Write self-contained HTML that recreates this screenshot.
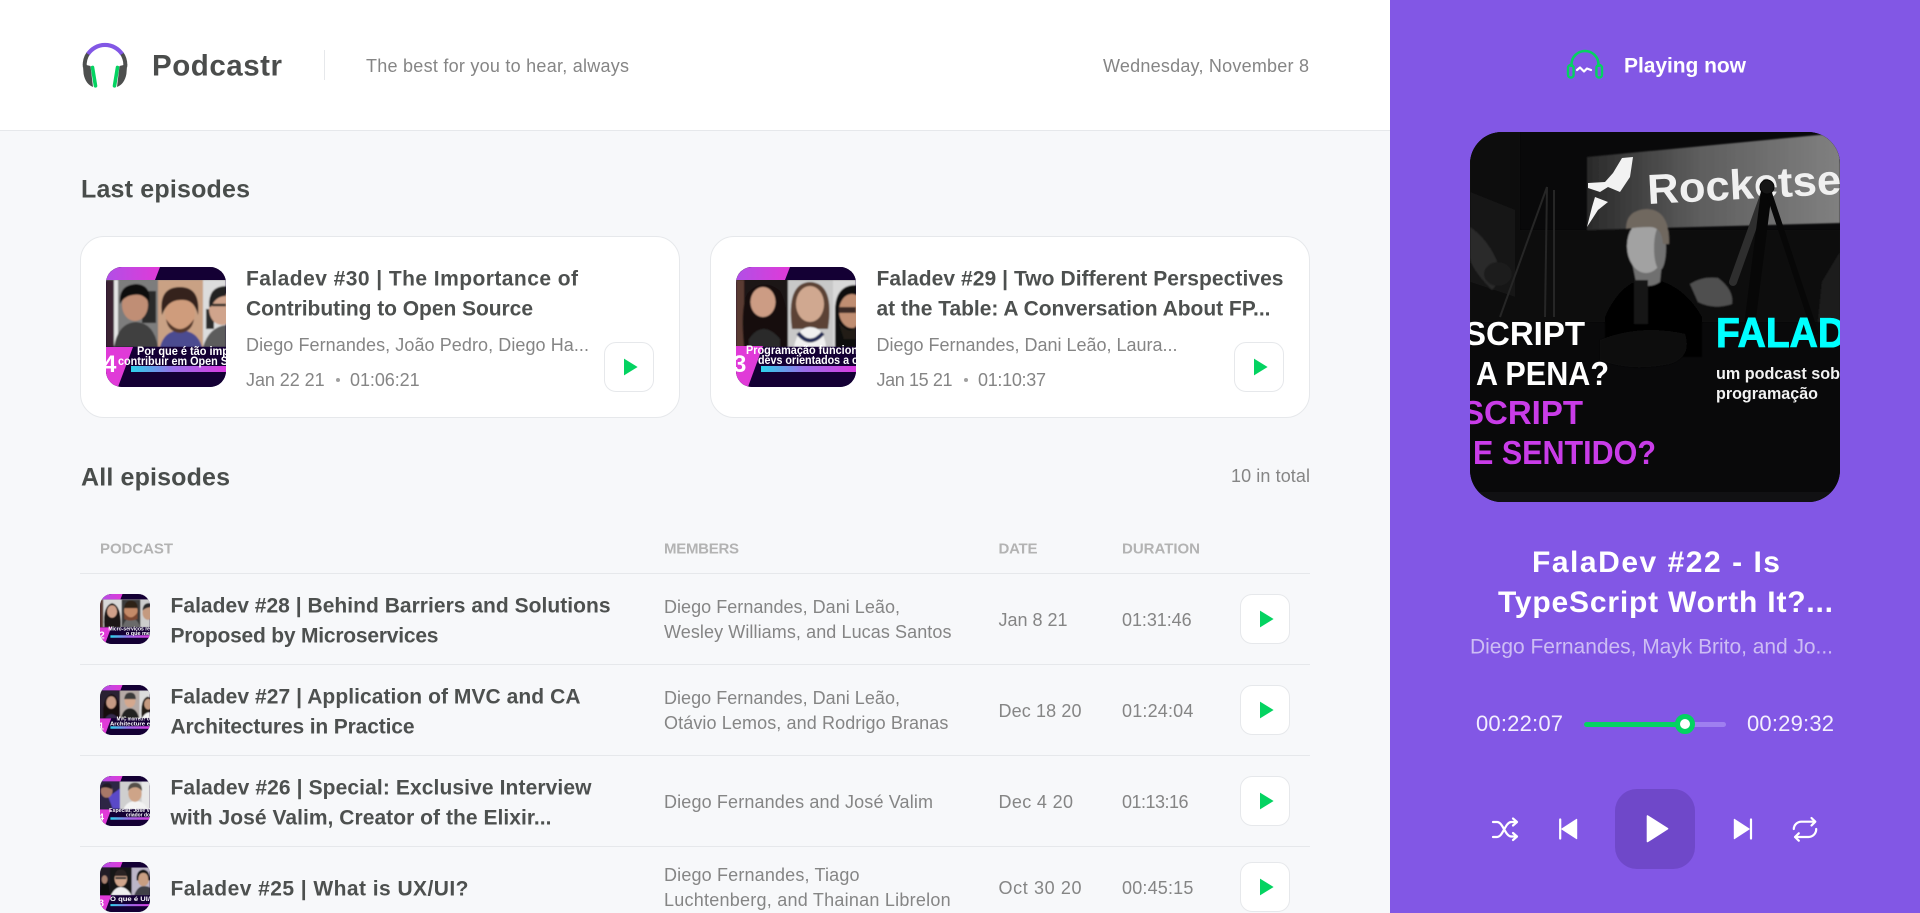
<!DOCTYPE html>
<html lang="en">
<head>
<meta charset="utf-8">
<title>Podcastr</title>
<style>
*{margin:0;padding:0;box-sizing:border-box}
html,body{width:1920px;height:913px;overflow:hidden;background:#f7f8fa}
body{font-family:"Liberation Sans",Arial,sans-serif;position:relative;color:#808080}
.t{position:absolute;white-space:nowrap;line-height:1;transform:translateY(-50%)}
.ti{font-weight:700;font-size:21px;color:#4d504f;letter-spacing:.4px;margin-top:1px}
.s{font-size:18px;color:#858585}
.h{font-weight:700;font-size:25px;color:#494d4b;margin-top:1px}
.th{font-weight:700;font-size:15px;color:#b3b3b3}
.w{color:#fff}
header{position:absolute;left:0;top:0;width:1390px;height:131px;background:#fff;border-bottom:1px solid #e6e8eb}
.divd{position:absolute;left:324px;top:50px;width:1px;height:30px;background:#e6e8eb}
.card{position:absolute;top:236px;width:600px;height:182px;background:#fff;border:1px solid #e6e8eb;border-radius:24px}
.thumb{position:absolute;display:block;overflow:hidden;background:#140034}
.big{width:120px;height:120px;border-radius:16px;top:267px}
.sm{width:50px;height:50px;border-radius:12px;left:100px}
.btn{position:absolute;width:50px;height:50px;background:#fff;border:1px solid #e6e8eb;border-radius:12px}
.btn svg{position:absolute;left:18px;top:15px;width:15px;height:18px}
.line{position:absolute;left:80px;width:1230px;height:1px;background:#e6e8eb}
.dot{position:absolute;width:4px;height:4px;border-radius:50%;background:#a0a0a0;top:378px}
aside{position:absolute;left:1390px;top:0;width:530px;height:913px;background:#8257e5}
.abs{position:absolute;left:0;top:0;width:1920px;height:913px;overflow:visible;pointer-events:none}
</style>
</head>
<body>
<svg width="0" height="0" style="position:absolute"><defs>
<filter id="b" x="-5%" y="-5%" width="110%" height="110%"><feGaussianBlur stdDeviation="0.9"/></filter>
<filter id="c" x="-5%" y="-5%" width="110%" height="110%"><feGaussianBlur stdDeviation="1.4"/></filter>
<linearGradient id="g" x1="0" x2="1"><stop offset="0" stop-color="#2bd3ea"/><stop offset=".45" stop-color="#9a6ee8"/><stop offset="1" stop-color="#d93be0"/></linearGradient>
<linearGradient id="m" x1="0" x2="1"><stop offset="0" stop-color="#b14fe6"/><stop offset="1" stop-color="#e03ad8"/></linearGradient>
<linearGradient id="sign" x1="0" x2="1"><stop offset="0" stop-color="#2a2a2a"/><stop offset=".45" stop-color="#5e5e5e"/><stop offset="1" stop-color="#808080"/></linearGradient>
</defs></svg>

<header>
  <svg style="position:absolute;left:80px;top:40px" width="50" height="50" viewBox="80 40 50 50" fill="none">
    <path d="M84.8 67 A20.5 20.5 0 0 1 88.5 53" stroke="#4d4f4e" stroke-width="4"/>
    <path d="M125.2 67 A20.5 20.5 0 0 0 121.5 53" stroke="#4d4f4e" stroke-width="4"/>
    <path d="M88 54 A20.5 20.5 0 0 1 122 54" stroke="#8257e5" stroke-width="4.2"/>
    <path d="M82.8 64 L83.6 74 Q85.5 84 93 87 L90.5 66 Q86 65 82.8 64Z" fill="#4d4f4e"/>
    <path d="M127.2 64 L126.4 74 Q124.5 84 117 87 L119.5 66 Q124 65 127.2 64Z" fill="#4d4f4e"/>
    <path d="M92.5 67.5 L95.5 85.8 M117.5 67.5 L114.5 85.8" stroke="#04d361" stroke-width="3.6" stroke-linecap="round"/>
  </svg>
  <span class="t" style="left:152px;top:66px;font-size:29.5px;font-weight:700;color:#4b4d4c;--w:130">Podcastr</span>
  <div class="divd"></div>
  <span class="t s" style="left:366px;top:66px;--w:263">The best for you to hear, always</span>
  <span class="t s" style="left:1103px;top:66px;--w:206">Wednesday, November 8</span>
</header>

<main>
  <h2 class="t h" style="left:81px;top:189px;--w:169">Last episodes</h2>

  <div class="card" style="left:80px"></div>
  <svg class="thumb big" style="left:106px" viewBox="0 0 120 120">
    <g filter="url(#b)">
      <rect width="120" height="80" fill="#777"/>
      <rect y="13" width="8" height="67" fill="#3a2430"/>
      <rect x="8" y="13" width="44" height="67" fill="#7d7d7d"/><rect x="8" y="13" width="4" height="67" fill="#e4e4e4"/><rect x="36" y="24" width="14" height="32" fill="#2a2a2a"/>
      <path d="M8 80 Q12 56 30 55 Q48 56 52 80Z" fill="#3f3f3f"/>
      <ellipse cx="29" cy="38" rx="13" ry="16" fill="#c08e75"/><path d="M14 37 Q12 18 30 17 Q46 18 43 36 Q38 26 27 28 Q18 29 14 37Z" fill="#111"/>
      <rect x="52" y="13" width="45" height="67" fill="#c9a184"/>
      <path d="M54 80 Q58 64 74 63 Q92 64 96 80Z" fill="#4b4b90"/><ellipse cx="74" cy="46" rx="15" ry="19" fill="#cf9c7c"/>
      <path d="M56 48 Q52 20 74 20 Q95 20 92 48 Q88 32 76 33 Q62 32 56 48Z" fill="#34231a"/><path d="M60 52 Q74 72 88 52 Q86 65 74 66 Q62 65 60 52Z" fill="#55392a"/>
      <rect x="97" y="13" width="23" height="67" fill="#dcdcdc"/><rect x="100" y="42" width="8" height="20" fill="#2a2a2a"/>
      <path d="M97 80 Q103 60 120 58 V80Z" fill="#5c5c5c"/><ellipse cx="116" cy="42" rx="13" ry="16" fill="#d0a48c"/><path d="M103 40 Q102 19 120 19 V29 Q110 29 105 40Z" fill="#232323"/><path d="M106 38 H120" stroke="#222" stroke-width="2.4"/>
    </g>
    <rect width="120" height="13" fill="#140034"/><path d="M0 0H54L49 13H0Z" fill="url(#m)"/>
    <rect y="80" width="120" height="40" fill="#140034"/><path d="M0 80H27L12 120H0Z" fill="#e03ad8"/>
    <rect x="25" y="99" width="95" height="6" fill="url(#g)"/>
    <text x="-3" y="105" font-size="24" font-weight="700" fill="#fff">4</text>
    <text x="31" y="88" font-size="12" font-weight="700" fill="#fff" textLength="92" lengthAdjust="spacingAndGlyphs">Por que é tão imp</text>
    <text x="12" y="98" font-size="12" font-weight="700" fill="#fff" textLength="110" lengthAdjust="spacingAndGlyphs">contribuir em Open S</text>
  </svg>
  <span class="t ti" style="left:246px;top:278px;--w:332">Faladev #30 | The Importance of</span>
  <span class="t ti" style="left:246px;top:308px;--w:287">Contributing to Open Source</span>
  <span class="t s" style="left:246px;top:345px;--w:343">Diego Fernandes, João Pedro, Diego Ha...</span>
  <span class="t s" style="left:246px;top:380px;--w:78.6">Jan 22 21</span>
  <i class="dot" style="left:335.5px"></i>
  <span class="t s" style="left:350px;top:380px;--w:69.6">01:06:21</span>
  <div class="btn" style="left:604px;top:342px"><svg viewBox="0 0 15 18"><path d="M1 0.6 14.6 9 1 17.4Z" fill="#04d361"/></svg></div>

  <div class="card" style="left:710px"></div>
  <svg class="thumb big" style="left:736px" viewBox="0 0 120 120">
    <g filter="url(#b)">
      <rect width="120" height="80" fill="#1a1214"/>
      <rect y="13" width="8" height="67" fill="#5a3a30"/>
      <path d="M8 80 Q4 38 12 26 Q27 10 44 24 Q54 42 50 80Z" fill="#120a0a"/>
      <ellipse cx="27" cy="35" rx="12.5" ry="15" fill="#cc9c84"/><path d="M13 72 Q27 52 44 72 V80H13Z" fill="#2a2a2a"/>
      <rect x="52" y="13" width="45" height="67" fill="#c8c8c8"/>
      <path d="M56 62 Q50 16 74 15 Q99 16 92 62Z" fill="#5b4334"/>
      <ellipse cx="74" cy="37" rx="14" ry="18" fill="#d0a890"/>
      <path d="M58 80 Q62 60 74 60 Q88 60 90 80Z" fill="#f0f0f0"/><path d="M62 66 Q74 81 87 66" stroke="#232a55" stroke-width="4" fill="none"/>
      <rect x="97" y="13" width="23" height="67" fill="#d8d8d8"/><path d="M99 80 V44 Q99 18 120 18 V80Z" fill="#111"/>
      <ellipse cx="116" cy="44" rx="13" ry="17" fill="#c08e72"/><rect x="103" y="40" width="17" height="6" fill="#3a2c26"/><path d="M103 56 Q115 70 120 58 V72 H108Z" fill="#241a16"/>
    </g>
    <rect width="120" height="13" fill="#140034"/><path d="M0 0H54L49 13H0Z" fill="url(#m)"/>
    <rect y="80" width="120" height="40" fill="#140034"/><path d="M0 79H27L12 120H0Z" fill="#e03ad8"/>
    <rect x="25" y="99" width="95" height="6" fill="url(#g)"/>
    <text x="-3" y="105" font-size="24" font-weight="700" fill="#fff">3</text>
    <text x="10" y="87" font-size="12" font-weight="700" fill="#fff" textLength="112" lengthAdjust="spacingAndGlyphs">Programação funcion</text>
    <text x="22" y="97" font-size="12" font-weight="700" fill="#fff" textLength="100" lengthAdjust="spacingAndGlyphs">devs orientados a c</text>
  </svg>
  <span class="t ti" style="left:876.5px;top:278px;--w:407">Faladev #29 | Two Different Perspectives</span>
  <span class="t ti" style="left:876.5px;top:308px;--w:394">at the Table: A Conversation About FP...</span>
  <span class="t s" style="left:876.5px;top:345px;--w:301">Diego Fernandes, Dani Leão, Laura...</span>
  <span class="t s" style="left:876.5px;top:380px;--w:76">Jan 15 21</span>
  <i class="dot" style="left:963.5px"></i>
  <span class="t s" style="left:978px;top:380px;--w:68">01:10:37</span>
  <div class="btn" style="left:1234px;top:342px"><svg viewBox="0 0 15 18"><path d="M1 0.6 14.6 9 1 17.4Z" fill="#04d361"/></svg></div>

  <h2 class="t h" style="left:81px;top:477px;--w:149">All episodes</h2>
  <span class="t s" style="left:1231px;top:476px;--w:79">10 in total</span>

  <span class="t th" style="left:100px;top:549px;--w:73">PODCAST</span>
  <span class="t th" style="left:664px;top:549px;--w:75">MEMBERS</span>
  <span class="t th" style="left:998.5px;top:549px;--w:39">DATE</span>
  <span class="t th" style="left:1122px;top:549px;--w:78">DURATION</span>
  <div class="line" style="top:573px"></div>
  <div class="line" style="top:664px"></div>
  <div class="line" style="top:755px"></div>
  <div class="line" style="top:846px"></div>

  <!-- row 1 -->
  <svg class="thumb sm" style="top:594px" viewBox="0 0 120 120">
    <g filter="url(#c)">
      <rect width="120" height="80" fill="#ddd"/><rect y="13" width="8" height="67" fill="#5a3a30"/>
      <rect x="8" y="13" width="44" height="67" fill="#d8d8d8"/>
      <path d="M10 80 Q6 28 29 22 Q52 28 50 80Z" fill="#1d1414"/><ellipse cx="29" cy="42" rx="12" ry="15" fill="#d0a08a"/>
      <rect x="52" y="13" width="45" height="67" fill="#3a3a3a"/><path d="M54 80 Q60 58 74 58 Q90 58 96 80Z" fill="#6b6b6b"/>
      <ellipse cx="74" cy="40" rx="16" ry="20" fill="#c48a68"/><path d="M58 44 Q74 68 90 44 V60 Q74 68 58 60Z" fill="#7a4630"/><path d="M58 34 Q60 16 74 16 Q90 16 90 34Z" fill="#2e2018"/>
      <rect x="97" y="13" width="23" height="67" fill="#ccc"/><ellipse cx="115" cy="45" rx="13" ry="17" fill="#c49a80"/><path d="M102 40 Q103 20 120 22 V32 Q110 32 102 40Z" fill="#2b2b2b"/>
    </g>
    <rect width="120" height="13" fill="#140034"/><path d="M0 0H54L49 13H0Z" fill="url(#m)"/>
    <rect y="80" width="120" height="40" fill="#140034"/><path d="M0 80H27L12 120H0Z" fill="#e03ad8"/>
    <rect x="25" y="99" width="95" height="6" fill="url(#g)"/>
    <text x="-2" y="107" font-size="24" font-weight="700" fill="#fff">2</text>
    <text x="20" y="88" font-size="12" font-weight="700" fill="#fff" textLength="100" lengthAdjust="spacingAndGlyphs">Micro-serviços re</text>
    <text x="62" y="98" font-size="12" font-weight="700" fill="#fff" textLength="58" lengthAdjust="spacingAndGlyphs">o que me</text>
  </svg>
  <span class="t ti" style="left:170.5px;top:605px;--w:440">Faladev #28 | Behind Barriers and Solutions</span>
  <span class="t ti" style="left:170.5px;top:635px;--w:268">Proposed by Microservices</span>
  <span class="t s" style="left:664px;top:607px;--w:236">Diego Fernandes, Dani Leão,</span>
  <span class="t s" style="left:664px;top:632px;--w:287.5">Wesley Williams, and Lucas Santos</span>
  <span class="t s" style="left:998.5px;top:620px;--w:69">Jan 8 21</span>
  <span class="t s" style="left:1122px;top:620px;--w:69.6">01:31:46</span>
  <div class="btn" style="left:1240px;top:594px"><svg viewBox="0 0 15 18"><path d="M1 0.6 14.6 9 1 17.4Z" fill="#04d361"/></svg></div>

  <!-- row 2 -->
  <svg class="thumb sm" style="top:685px" viewBox="0 0 120 120">
    <g filter="url(#c)">
      <rect width="120" height="80" fill="#2a2030"/>
      <path d="M8 80 Q4 28 28 22 Q50 28 46 80Z" fill="#160c10"/><ellipse cx="27" cy="42" rx="12" ry="15" fill="#c69a84"/><path d="M12 80 Q27 60 44 80Z" fill="#352a4d"/>
      <rect x="48" y="13" width="46" height="67" fill="#b5aaa6"/><path d="M50 80 Q56 56 72 56 Q88 56 94 80Z" fill="#222"/>
      <ellipse cx="72" cy="38" rx="13" ry="16" fill="#d4a88e"/><path d="M58 34 Q60 18 72 18 Q86 18 86 34Z" fill="#3a3a3a"/>
      <rect x="94" y="13" width="26" height="67" fill="#ddd"/><path d="M100 80 Q96 34 114 28 L120 30 V80Z" fill="#201a18"/><ellipse cx="116" cy="46" rx="10" ry="13" fill="#c49a80"/><path d="M100 80 Q110 64 120 66 V80Z" fill="#f2f2f2"/>
    </g>
    <rect width="120" height="13" fill="#140034"/><path d="M0 0H54L49 13H0Z" fill="url(#m)"/>
    <rect y="80" width="120" height="40" fill="#140034"/><path d="M0 80H27L12 120H0Z" fill="#e03ad8"/>
    <rect x="25" y="99" width="95" height="6" fill="url(#g)"/>
    <text x="-4" y="107" font-size="24" font-weight="700" fill="#fff">1</text>
    <text x="40" y="85" font-size="12" font-weight="700" fill="#fff" textLength="80" lengthAdjust="spacingAndGlyphs">MVC morreu? U</text>
    <text x="24" y="97" font-size="12" font-weight="700" fill="#fff" textLength="96" lengthAdjust="spacingAndGlyphs">Architecture e</text>
  </svg>
  <span class="t ti" style="left:170.5px;top:696px;--w:410">Faladev #27 | Application of MVC and CA</span>
  <span class="t ti" style="left:170.5px;top:726px;--w:244">Architectures in Practice</span>
  <span class="t s" style="left:664px;top:698px;--w:236">Diego Fernandes, Dani Leão,</span>
  <span class="t s" style="left:664px;top:723px;--w:284.4">Otávio Lemos, and Rodrigo Branas</span>
  <span class="t s" style="left:998.5px;top:711px;--w:83">Dec 18 20</span>
  <span class="t s" style="left:1122px;top:711px;--w:71.4">01:24:04</span>
  <div class="btn" style="left:1240px;top:685px"><svg viewBox="0 0 15 18"><path d="M1 0.6 14.6 9 1 17.4Z" fill="#04d361"/></svg></div>

  <!-- row 3 -->
  <svg class="thumb sm" style="top:776px" viewBox="0 0 120 120">
    <g filter="url(#c)">
      <rect width="120" height="80" fill="#3a2a70"/><rect width="48" height="80" fill="#2d2745"/>
      <path d="M20 50 L48 30 V78 H30Z" fill="#5a48c8"/><ellipse cx="16" cy="36" rx="14" ry="16" fill="#a87868"/><path d="M2 30 Q8 14 24 18 Q30 24 28 32 Q14 24 2 30Z" fill="#231a25"/>
      <rect x="48" y="13" width="72" height="67" fill="#cfcfcf"/><rect x="100" y="13" width="20" height="67" fill="#e8e8e8"/>
      <path d="M56 80 Q64 60 86 60 Q106 60 114 80Z" fill="#f3f3f3"/><ellipse cx="84" cy="42" rx="16" ry="20" fill="#cea488"/><path d="M67 36 Q67 16 84 16 Q101 16 101 36 Q92 26 84 27 Q74 27 67 36Z" fill="#55504a"/>
    </g>
    <rect width="120" height="13" fill="#140034"/><path d="M0 0H54L49 13H0Z" fill="url(#m)"/>
    <rect y="80" width="120" height="40" fill="#140034"/><path d="M0 80H27L12 120H0Z" fill="#e03ad8"/>
    <rect x="25" y="99" width="95" height="6" fill="url(#g)"/>
    <text x="-4" y="107" font-size="24" font-weight="700" fill="#fff">4</text>
    <text x="22" y="86" font-size="12" font-weight="700" fill="#fff" textLength="98" lengthAdjust="spacingAndGlyphs">Especial: José V</text>
    <text x="62" y="97" font-size="12" font-weight="700" fill="#fff" textLength="58" lengthAdjust="spacingAndGlyphs">criador do</text>
  </svg>
  <span class="t ti" style="left:170.5px;top:787px;--w:421">Faladev #26 | Special: Exclusive Interview</span>
  <span class="t ti" style="left:170.5px;top:817px;--w:381">with José Valim, Creator of the Elixir...</span>
  <span class="t s" style="left:664px;top:802px;--w:269">Diego Fernandes and José Valim</span>
  <span class="t s" style="left:998.5px;top:802px;--w:74.5">Dec 4 20</span>
  <span class="t s" style="left:1122px;top:802px;--w:66.5">01:13:16</span>
  <div class="btn" style="left:1240px;top:776px"><svg viewBox="0 0 15 18"><path d="M1 0.6 14.6 9 1 17.4Z" fill="#04d361"/></svg></div>

  <!-- row 4 -->
  <svg class="thumb sm" style="top:862px" viewBox="0 0 120 120">
    <g filter="url(#c)">
      <rect width="120" height="80" fill="#231c28"/><path d="M0 80 Q2 40 12 34 Q22 40 24 80Z" fill="#0e0a0e"/><ellipse cx="11" cy="42" rx="7" ry="10" fill="#a88070"/>
      <rect x="24" y="13" width="52" height="67" fill="#141414"/><path d="M26 80 Q36 60 50 60 Q64 60 76 80Z" fill="#eeeeee"/>
      <ellipse cx="50" cy="40" rx="15" ry="19" fill="#d0a68c"/><rect x="37" y="36" width="26" height="5" fill="#333"/><path d="M35 34 Q37 18 50 18 Q63 18 65 34Z" fill="#2a2020"/>
      <rect x="76" y="13" width="44" height="67" fill="#bcb6c8"/><path d="M82 80 Q90 58 104 58 Q116 58 120 62 V80Z" fill="#3f3f46"/>
      <ellipse cx="104" cy="40" rx="14" ry="18" fill="#c89e82"/><path d="M88 44 Q86 20 104 18 Q120 20 120 44 L116 44 Q116 26 104 26 Q92 26 92 44Z" fill="#141414"/>
    </g>
    <rect width="120" height="13" fill="#140034"/><path d="M0 0H54L49 13H0Z" fill="url(#m)"/>
    <rect y="80" width="120" height="40" fill="#140034"/><path d="M0 80H27L12 120H0Z" fill="#e03ad8"/>
    <rect x="25" y="101" width="95" height="5" fill="url(#g)"/>
    <text x="-4" y="107" font-size="24" font-weight="700" fill="#fff">8</text>
    <text x="24" y="94" font-size="16" font-weight="700" fill="#fff" textLength="96" lengthAdjust="spacingAndGlyphs">O que é UI/</text>
  </svg>
  <span class="t ti" style="left:170.5px;top:888px;--w:298">Faladev #25 | What is UX/UI?</span>
  <span class="t s" style="left:664px;top:875px;--w:195.5">Diego Fernandes, Tiago</span>
  <span class="t s" style="left:664px;top:900px;--w:286.6">Luchtenberg, and Thainan Librelon</span>
  <span class="t s" style="left:998.5px;top:888px;--w:83">Oct 30 20</span>
  <span class="t s" style="left:1122px;top:888px;--w:71.4">00:45:15</span>
  <div class="btn" style="left:1240px;top:862px"><svg viewBox="0 0 15 18"><path d="M1 0.6 14.6 9 1 17.4Z" fill="#04d361"/></svg></div>
</main>

<aside></aside>
<svg class="abs" viewBox="0 0 1920 913" fill="none">
  <path d="M1571.5 67 V64.5 A13.5 13.5 0 0 1 1598.5 64.5 V67" stroke="#04d361" stroke-width="2.6"/>
  <rect x="1568" y="65" width="5.6" height="12.6" rx="2.8" stroke="#04d361" stroke-width="2.4"/>
  <rect x="1596.4" y="65" width="5.6" height="12.6" rx="2.8" stroke="#04d361" stroke-width="2.4"/>
  <path d="M1577 70 L1580 67.5 L1584 71.5 L1587 68.5 L1591 70" stroke="#fff" stroke-width="2.2" stroke-linecap="round" stroke-linejoin="round"/>
</svg>
<span class="t w" style="left:1624px;top:66px;font-size:21px;font-weight:700;--w:122">Playing now</span>

<svg class="thumb" style="left:1470px;top:132px;width:370px;height:370px;border-radius:32px;background:#0a0a0b" viewBox="0 0 370 370">
  <rect width="370" height="370" fill="#09090a"/>
  <g filter="url(#b)">
    <rect x="0" y="0" width="50" height="190" fill="#0f0f0f"/>
    <path d="M117 25 L370 1 V91 L117 98Z" fill="url(#sign)"/>
    <rect x="0" y="98" width="370" height="92" fill="#0b0b0b"/>
    <path d="M0 60 L45 78 V165 L0 150Z" fill="#141414"/>
    <path d="M0 95 Q24 112 32 145 L22 158 Q0 135 0 125Z" fill="#2c2c2c"/>
    <ellipse cx="28" cy="142" rx="14" ry="12" fill="#1a1a1a"/>
    <path d="M370 120 L352 150 L348 190 H370Z" fill="#1c1c1c"/>
    <path d="M135 185 Q150 150 177 146 Q212 150 232 185 V225 H135Z" fill="#040404"/>
    <path d="M162 130 H192 L190 150 Q178 158 166 150Z" fill="#6f6f6f"/>
    <ellipse cx="176" cy="114" rx="19" ry="27" fill="#a2a2a2"/>
    <ellipse cx="190" cy="116" rx="6" ry="22" fill="#727272"/>
    <path d="M156 97 Q156 78 177 77 Q200 78 199 112 L193 112 Q192 95 180 95 Q166 95 156 97Z" fill="#70675f"/>
    <rect x="164" y="148" width="14" height="44" fill="#141414"/>
    <path d="M220 152 Q232 144 248 146 Q264 158 262 172 Q244 178 228 170Z" fill="#505050"/>
    <path d="M130 208 Q170 192 215 202 Q222 225 200 232 Q160 240 130 228Z" fill="#101010"/>
  </g>
  <text x="178" y="72" font-size="42" font-weight="700" fill="#f0f0f0" textLength="194" lengthAdjust="spacingAndGlyphs" transform="rotate(-3 178 72)">Rocketse</text>
  <path d="M152 26 L163 25 L160 45 L150 60 L138 55 L130 60 L118 56 L118 51 L135 50 L143 41Z" fill="#f2f2f2"/>
  <path d="M125 65 L138 70 L128 78 L117 95 L122 75Z" fill="#f4f4f4"/>
  <g stroke="#070707" fill="none" stroke-linecap="round">
    <path d="M297 55 L263 150" stroke-width="8" stroke="#2e2e2e"/>
    <path d="M297 55 L280 190" stroke-width="11"/>
    <path d="M297 55 L345 200" stroke-width="6"/>
    <circle cx="297" cy="55" r="7" fill="#151515"/>
  </g>
  <g stroke="#262626" fill="none" stroke-width="2">
    <path d="M77 55 L30 185"/><path d="M77 55 L75 185"/><path d="M84 58 L84 185"/>
  </g>
  <rect y="360" width="370" height="10" fill="#111113"/>
  <g font-weight="700">
    <text x="-6" y="213" font-size="33" fill="#fff" textLength="121" lengthAdjust="spacingAndGlyphs">SCRIPT</text>
    <text x="6" y="253" font-size="33" fill="#fff" textLength="133" lengthAdjust="spacingAndGlyphs">A PENA?</text>
    <text x="-8" y="292" font-size="33" fill="#c93ce8" textLength="121" lengthAdjust="spacingAndGlyphs">SCRIPT</text>
    <text x="3" y="332" font-size="33" fill="#c93ce8" textLength="183" lengthAdjust="spacingAndGlyphs">E SENTIDO?</text>
    <text x="246" y="215" font-size="42" fill="#0ff" stroke="#0ff" stroke-width="1" textLength="130" lengthAdjust="spacingAndGlyphs">FALAD</text>
    <text x="246" y="247" font-size="17" fill="#f2f2f2" textLength="124" lengthAdjust="spacingAndGlyphs">um podcast sob</text>
    <text x="246" y="267" font-size="17" fill="#f2f2f2" textLength="102" lengthAdjust="spacingAndGlyphs">programação</text>
  </g>
</svg>

<span class="t w" style="left:1532px;top:563px;font-size:30px;font-weight:700;--w:248">FalaDev #22 - Is</span>
<span class="t w" style="left:1498px;top:603px;font-size:30px;font-weight:700;--w:335">TypeScript Worth It?...</span>
<span class="t" style="left:1470px;top:647px;font-size:21px;color:#cdbdf4;--w:363">Diego Fernandes, Mayk Brito, and Jo...</span>
<span class="t" style="left:1476px;top:724px;font-size:22px;color:#f3eefe;--w:87">00:22:07</span>
<span class="t" style="left:1747px;top:724px;font-size:22px;color:#f3eefe;--w:87">00:29:32</span>

<div style="position:absolute;left:1584px;top:722px;width:142px;height:5px;border-radius:3px;background:#9f7ff0"></div>
<div style="position:absolute;left:1584px;top:722px;width:101px;height:5px;border-radius:3px;background:#04d361"></div>
<div style="position:absolute;left:1675px;top:714px;width:20px;height:20px;border-radius:50%;background:#fff;border:5px solid #04d361"></div>

<div style="position:absolute;left:1615px;top:789px;width:80px;height:80px;border-radius:22px;background:#6f48c9"></div>
<svg class="abs" viewBox="0 0 1920 913" fill="none" stroke="#fff" stroke-width="2.2" stroke-linecap="round" stroke-linejoin="round">
  <path d="M1493 822 H1497 C1503 822 1505 836 1511 836.5 H1516"/>
  <path d="M1493 837 H1497 C1503 837 1505 822.5 1511 822 H1516"/>
  <path d="M1513 818.5 L1517 822 L1513 825.5 M1513 833 L1517 836.5 L1513 840"/>
  <path d="M1560.2 819.5 V838.5"/>
  <path d="M1576.7 819.3 V838.7 L1561.7 829Z" fill="#fff" stroke-width="1"/>
  <path d="M1751 819.5 V838.5"/>
  <path d="M1734.3 819.3 V838.7 L1749.3 829Z" fill="#fff" stroke-width="1"/>
  <path d="M1647.5 816 V841.5 L1667.5 828.7Z" fill="#fff" stroke-width="1.6"/>
  <path d="M1793.8 829 A7.5 7.5 0 0 1 1801.3 821.7 H1815"/>
  <path d="M1811.5 818 L1815.3 821.7 L1811.5 825.5"/>
  <path d="M1816.2 829 A7.8 7.8 0 0 1 1808.5 837 H1795.2"/>
  <path d="M1798.8 833.3 L1795 837 L1798.8 840.7"/>
</svg>

<script>
document.querySelectorAll('.t').forEach(function(e){
  var w=parseFloat(e.style.getPropertyValue('--w'));
  if(!w)return;
  e.style.letterSpacing='0px';
  var c=e.getBoundingClientRect().width,n=e.textContent.length;
  e.style.letterSpacing=((w-c)/(n-1)).toFixed(3)+'px';
});
</script>
</body>
</html>
